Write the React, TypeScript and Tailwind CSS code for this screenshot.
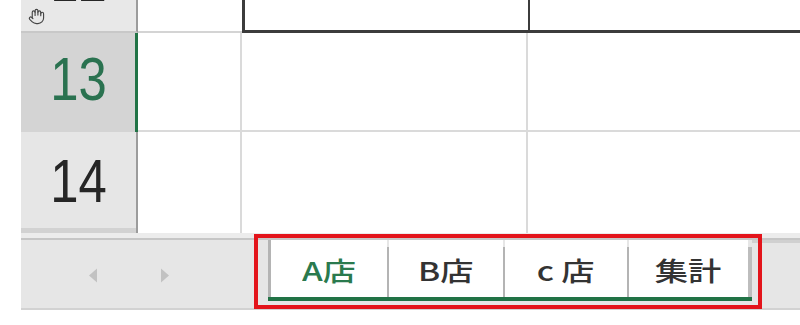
import { Hand } from 'lucide-react'

const tabs = [
  { label: 'A店', active: true, w: 'w-[116px]' },
  { label: 'B店', active: false, w: 'w-[114px]' },
  { label: 'c 店', active: false, w: 'w-[122px]' },
  { label: '集計', active: false, w: 'w-[119px]' },
]

function RowHead({ n, selected }: { n: string; selected?: boolean }) {
  return (
    <div
      className={
        selected
          ? 'flex w-[117px] shrink-0 items-center justify-center border-r-[3px] border-[#217346] bg-[#d4d4d4] text-[#2a7250]'
          : 'flex w-[117px] shrink-0 items-center justify-center border-r-[2px] border-[#9c9c9c] bg-[#e6e6e6] text-[#262626]'
      }
    >
      <span className="-mt-[8px] inline-block scale-x-[0.82] text-[62px] leading-none">{n}</span>
    </div>
  )
}

export default function App() {
  return (
    <div className="relative h-[325px] w-[800px] overflow-hidden bg-white font-['Liberation_Sans',sans-serif]">
      <div className="ml-[21px] flex flex-col">
        {/* row 12 */}
        <div className="flex h-[33px]">
          <div className="flex w-[117px] shrink-0 justify-center overflow-hidden border-r-[2px] border-b-[2px] border-[#9c9c9c] border-b-[#c8c8c8] bg-[#e8e8e8]">
            <span className="-mt-[51px] inline-block scale-x-[0.82] text-[62px] leading-none text-[#262626]">12</span>
          </div>
          <div className="w-[104px] shrink-0 border-b-[2px] border-[#d4d4d4]" />
          <div className="w-[286px] shrink-0 overflow-hidden border-l-[3px] border-b-[3px] border-[#3c3c3c] pl-[19px]">
            <span className="-mt-[38px] block font-['Noto_Sans_CJK_JP',sans-serif] text-[36px] leading-none text-[#222]">合計</span>
          </div>
          <div className="flex-1 border-l-[2px] border-b-[3px] border-[#3c3c3c]" />
        </div>

        {/* row 13 */}
        <div className="flex h-[99px]">
          <RowHead n="13" selected />
          <div className="w-[104px] shrink-0 border-r-[2px] border-b-[2px] border-[#dadada]" />
          <div className="w-[286px] shrink-0 border-r-[2px] border-b-[2px] border-[#dadada]" />
          <div className="flex-1 border-b-[2px] border-[#dadada]" />
        </div>

        {/* row 14 */}
        <div className="flex h-[101px]">
          <div className="flex w-[117px] shrink-0 flex-col border-r-[2px] border-[#9c9c9c] bg-[#e6e6e6]">
            <div className="flex flex-1 items-center justify-center text-[#262626]">
              <span className="mt-[2px] inline-block scale-x-[0.82] text-[62px] leading-none">14</span>
            </div>
            <div className="h-[5px] bg-[#d2d2d2]" />
          </div>
          <div className="w-[104px] shrink-0 border-r-[2px] border-[#dadada]" />
          <div className="w-[286px] shrink-0 border-r-[2px] border-[#dadada]" />
          <div className="flex-1" />
        </div>

        <div className="h-[5px] bg-[#ececec]" />

        {/* sheet tab bar */}
        <div className="flex h-[72px] border-t-[2px] border-b-[2px] border-[#c6c6c6] border-b-[#d2d2d2] bg-[#e6e6e6]">
          <div className="flex w-[247px] shrink-0 items-center gap-[62px] pl-[67px] pt-[2px]">
            <svg width="10" height="15" viewBox="0 0 10 15">
              <path d="M9 0.5 L1 7.5 L9 14.5 Z" fill="#c2c2c2" />
            </svg>
            <svg width="10" height="15" viewBox="0 0 10 15">
              <path d="M1 0.5 L9 7.5 L1 14.5 Z" fill="#c2c2c2" />
            </svg>
          </div>
          <div className="flex h-[61px] items-stretch border-b-[4px] border-[#217346]">
            {tabs.map((t, i) => (
              <div key={t.label} className="flex items-stretch">
                <div
                  className={
                    i === 0
                      ? 'w-[3px] bg-[#b4b4b4]'
                      : 'mt-[7px] w-[2px] bg-[#b4b4b4]'
                  }
                />
                <div
                  className={`${t.w} flex items-center justify-center bg-white font-['Noto_Sans_CJK_JP',sans-serif] ${
                    t.active ? 'text-[#2a7a4e]' : 'text-[#333]'
                  }`}
                >
                  <span className="mt-[3px] inline-block scale-x-[1.28] text-[26px] font-medium leading-none">
                    {t.label}
                  </span>
                </div>
              </div>
            ))}
            <div className="mt-[7px] w-[4px] bg-[#bdbdbd]" />
          </div>
          <div className="flex-1 border-t-[3px] border-[#d0d0d0]" />
        </div>
      </div>

      {/* cursor + annotation overlays */}
      <Hand className="absolute left-[28px] top-[8px] text-[#444]" size={17} strokeWidth={1.6} />
      <div className="absolute left-[254px] top-[234px] h-[75px] w-[508px] border-[4px] border-[#e3141b]" />
    </div>
  )
}
